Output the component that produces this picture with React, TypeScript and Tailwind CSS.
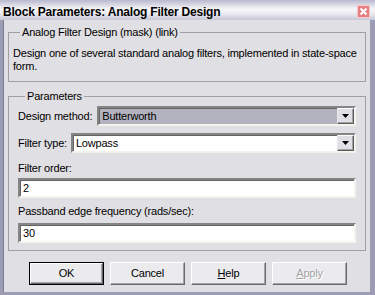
import React from 'react';

/* Raised classic push button. Default one gets the black frame. */
function PushButton({
  children,
  isDefault = false,
  disabled = false,
}: {
  children: React.ReactNode;
  isDefault?: boolean;
  disabled?: boolean;
}) {
  const inner = (
    <div className="flex h-full w-full items-center justify-center border border-t-white border-l-white border-b-[#6a6a6a] border-r-[#6a6a6a] bg-[#ebebee] shadow-[inset_-1px_-1px_0_#a3a3a8]">
      <span
        className={
          disabled
            ? 'text-[#a3a3a3] [text-shadow:1px_1px_0_#ffffff]'
            : 'text-black'
        }
      >
        {children}
      </span>
    </div>
  );
  return (
    <div
      className={
        'h-[23px] w-[75px] ' + (isDefault ? 'border border-black' : '')
      }
    >
      {inner}
    </div>
  );
}

function DropArrow() {
  return (
    <span className="flex h-[16px] w-[17px] items-center justify-center border border-t-white border-l-[#e9e9ec] border-b-[#5c5c5c] border-r-[#5c5c5c] bg-[#e0dfe3] shadow-[inset_-1px_-1px_0_#a0a0a6]">
      <svg width="7" height="4" viewBox="0 0 7 4">
        <polygon points="0,0 7,0 3.5,4" fill="#000" />
      </svg>
    </span>
  );
}

const sunken =
  'border-2 border-t-[#858585] border-l-[#858585] border-b-[#f4f3ee] border-r-[#f4f3ee] shadow-[inset_1px_1px_0_#646464]';

function Select({ value, grey = false }: { value: string; grey?: boolean }) {
  return (
    <div
      className={
        'flex h-[20px] flex-1 items-center ' +
        sunken +
        (grey ? ' bg-[#b3b2bf]' : ' bg-white')
      }
    >
      <span className="flex-1 pl-[3px] leading-[13px]">{value}</span>
      <DropArrow />
    </div>
  );
}

function TextField({ value }: { value: string }) {
  return (
    <input
      readOnly
      value={value}
      className={
        'block h-[20px] w-full bg-white pl-[3px] leading-[13px] outline-none ' +
        sunken
      }
    />
  );
}

export default function App() {
  return (
    <div className="flex h-[295px] w-[375px] flex-col bg-[#9c9cb4] font-['Liberation_Sans',Arial,sans-serif] text-[11px] leading-[13px] tracking-[-0.2px] text-black">
      {/* Title bar */}
      <div className="flex h-[20px] items-start justify-between bg-[linear-gradient(to_bottom,#b8b8cf_0%,#f6f6f9_45%,#e9e9f0_70%,#c6c6d6_100%)] pl-[3px] pr-[5px]">
        <div className="pt-[6px] text-[12px] font-bold leading-[13px]">
          Block Parameters: Analog Filter Design
        </div>
        <svg className="mt-[5px]" width="13" height="13" viewBox="0 0 13 13">
          <rect x="0.5" y="0.5" width="12" height="12" fill="#e57f83" stroke="#f6c9c9" />
          <path d="M3.5 3.5 L9.5 9.5 M9.5 3.5 L3.5 9.5" stroke="#fff" strokeWidth="2" />
        </svg>
      </div>

      {/* Client area */}
      <div className="mb-[3px] ml-[3px] mr-[5px] flex flex-1 flex-col bg-[#e0dfe3] pl-[5px] pr-[4px] pt-[6px] shadow-[inset_1px_0_0_#7c7c96]">
        <fieldset className="border border-[#a09fa5] px-[4px] pb-[8px] pt-[8px]">
          <legend className="ml-[7px] px-[2px] leading-[13px]">
            Analog Filter Design (mask) (link)
          </legend>
          <p>
            Design one of several standard analog filters, implemented in
            state-space
            <br />
            form.
          </p>
        </fieldset>

        <fieldset className="mt-[8px] border border-[#a09fa5] px-[9px] pb-[7px] pt-[3px]">
          <legend className="ml-[7px] px-[2px] leading-[13px]">Parameters</legend>

          <div className="flex items-center gap-[5px]">
            <span>Design method:</span>
            <Select value="Butterworth" grey />
          </div>

          <div className="mt-[7px] flex items-center gap-[4px]">
            <span>Filter type:</span>
            <Select value="Lowpass" />
          </div>

          <div className="mt-[9px]">Filter order:</div>
          <div className="mt-[3px]">
            <TextField value="2" />
          </div>

          <div className="mt-[7px]">Passband edge frequency (rads/sec):</div>
          <div className="mt-[5px]">
            <TextField value="30" />
          </div>
        </fieldset>

        <div className="ml-[21px] mt-[11px] flex gap-[6px]">
          <PushButton isDefault>OK</PushButton>
          <PushButton>Cancel</PushButton>
          <PushButton>
            <span className="underline">H</span>elp
          </PushButton>
          <PushButton disabled>
            <span className="underline">A</span>pply
          </PushButton>
        </div>
      </div>
    </div>
  );
}
